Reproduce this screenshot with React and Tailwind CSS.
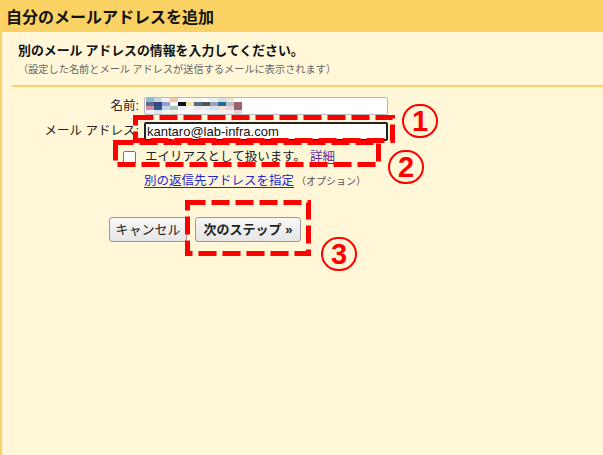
import React from "react";

const blur = [
  ["#8cbad3", "#c9d9e6", "#eef2f6", "#f1c7a6", "#ffffff", "#fffaf0", "#f4f4f4", "#ffffff", "#e6f1fa", "#d6dde2", "#f1e6dc", "#ffffff"],
  ["#5b6c94", "#3c4677", "#9b9bd1", "#f7f7f7", "#111111", "#f7e3a4", "#566b84", "#4e5650", "#9aa5a8", "#1f6e9c", "#b8bec4", "#9c6471"],
  ["#d98ba3", "#2b5c8b", "#bed6e6", "#aac3bd", "#e3f1f8", "#ffffff", "#eee5ee", "#e6eff8", "#d1e1ef", "#f6dfce", "#e2d4da", "#a05f6c"],
  ["#eef3f8", "#dbe6ef", "#f3f6f8", "#f6efe4", "#ffffff", "#ffffff", "#f7f3f7", "#f3f7fb", "#eef3f8", "#fbf1ea", "#f3eef0", "#e7d3d7"],
];

function Circled({ n, className }) {
  return (
    <div
      className={
        "absolute w-[36px] h-[34px] rounded-full border-2 border-[#ff0000] flex items-center justify-center text-[#ff0000] font-bold text-[29px] leading-none font-['Liberation_Sans',sans-serif] " +
        className
      }
    >
      <span className="mt-[1px]">{n}</span>
    </div>
  );
}

export default function App() {
  return (
    <div className="relative w-[603px] h-[455px] overflow-hidden bg-[#fff7d7] text-[#222] font-['Liberation_Sans','Noto_Sans_CJK_JP',sans-serif] flex flex-col">
      <div className="h-[32px] bg-[#fad163] flex items-center px-[6px] shrink-0">
        <span className="text-[16px] font-bold leading-none text-[#111] font-['Noto_Sans_CJK_JP',sans-serif]">
          自分のメールアドレスを追加
        </span>
      </div>
      <div className="flex-1 border-l-2 border-[#fad163] flex flex-col">
        <div className="pl-[16px] pt-[10px]">
          <div className="text-[12.9px] font-bold leading-[16px] font-['Noto_Sans_CJK_JP',sans-serif] text-[#111]">
            別のメール アドレスの情報を入力してください。
          </div>
          <div className="mt-[4px] text-[10.2px] leading-[14px] text-[#666] font-['Noto_Sans_CJK_JP',sans-serif]">
            （設定した名前とメール アドレスが送信するメールに表示されます）
          </div>
        </div>
        <div className="ml-[10px] mt-[9px] h-[2px] bg-[#fad163]" />

        <div className="flex flex-col ml-[10px] mt-[10px] text-[12.5px]">
          <div className="flex items-center h-[18px]">
            <div className="w-[128px] text-right pr-[1px] leading-none">名前:</div>
            <div className="ml-[4px] w-[244px] h-[18px] bg-white border border-[#b8b8b8] rounded-[2px] flex items-center pl-[1px]">
              <div className="flex flex-col">
                {blur.map((row, i) => (
                  <div key={i} className="flex">
                    {row.map((c, j) => (
                      <div key={j} className="w-[8px] h-[4px]" style={{ backgroundColor: c }} />
                    ))}
                  </div>
                ))}
              </div>
            </div>
          </div>

          <div className="flex items-center h-[19px] mt-[7px]">
            <div className="w-[128px] text-right pr-[1px] leading-none">メール アドレス:</div>
            <div className="ml-[4px] w-[244px] h-[19px] bg-white border-2 border-[#222] rounded-[2px] flex items-center pl-[1px] text-[13px] leading-none text-[#111]">
              <span className="underline decoration-wavy decoration-[#f08080] decoration-1 underline-offset-2">kantaro</span>
              <span>@lab-infra.com</span>
            </div>
          </div>

          <div className="flex items-center h-[16px] mt-[8px]">
            <div className="w-[128px] flex justify-end pr-[4px]">
              <div className="w-[13px] h-[13px] bg-white border border-[#767676] rounded-[2px]" />
            </div>
            <div className="ml-[5px] leading-none flex items-center">
              <span>エイリアスとして扱います。</span>
              <span className="ml-[4px] text-[#5b2a9a] underline underline-offset-2">詳細</span>
            </div>
          </div>

          <div className="flex items-center h-[16px] mt-[8px]">
            <div className="w-[128px]" />
            <div className="ml-[4px] leading-none flex items-baseline">
              <span className="text-[#2424c8] underline underline-offset-2">別の返信先アドレスを指定</span>
              <span className="ml-[2px] text-[10px] text-[#555]">（オプション）</span>
            </div>
          </div>

          <div className="flex items-center mt-[28px] ml-[97px] gap-[8px]">
            <button className="w-[78px] h-[25px] rounded-[3px] border border-[#9a9a9a] bg-gradient-to-b from-[#f7f7f7] to-[#e6e6e6] text-[13px] leading-none text-[#222]">
              キャンセル
            </button>
            <button className="w-[106px] h-[25px] rounded-[3px] border border-[#9a9a9a] bg-gradient-to-b from-[#f7f7f7] to-[#e6e6e6] text-[13px] font-bold leading-none text-[#222]">
              次のステップ »
            </button>
          </div>
        </div>
      </div>

      <svg className="absolute inset-0 pointer-events-none" width="603" height="455">
        <g fill="none" stroke="#ff0000" strokeWidth="5" strokeDasharray="18 6">
          <rect x="135.5" y="117.5" width="257" height="23" />
          <rect x="115.5" y="142.5" width="263" height="22" />
          <rect x="187.5" y="202.5" width="121" height="51" />
        </g>
      </svg>

      <Circled n="1" className="left-[402px] top-[104px]" />
      <Circled n="2" className="left-[388px] top-[150px]" />
      <Circled n="3" className="left-[321px] top-[237px]" />
    </div>
  );
}
